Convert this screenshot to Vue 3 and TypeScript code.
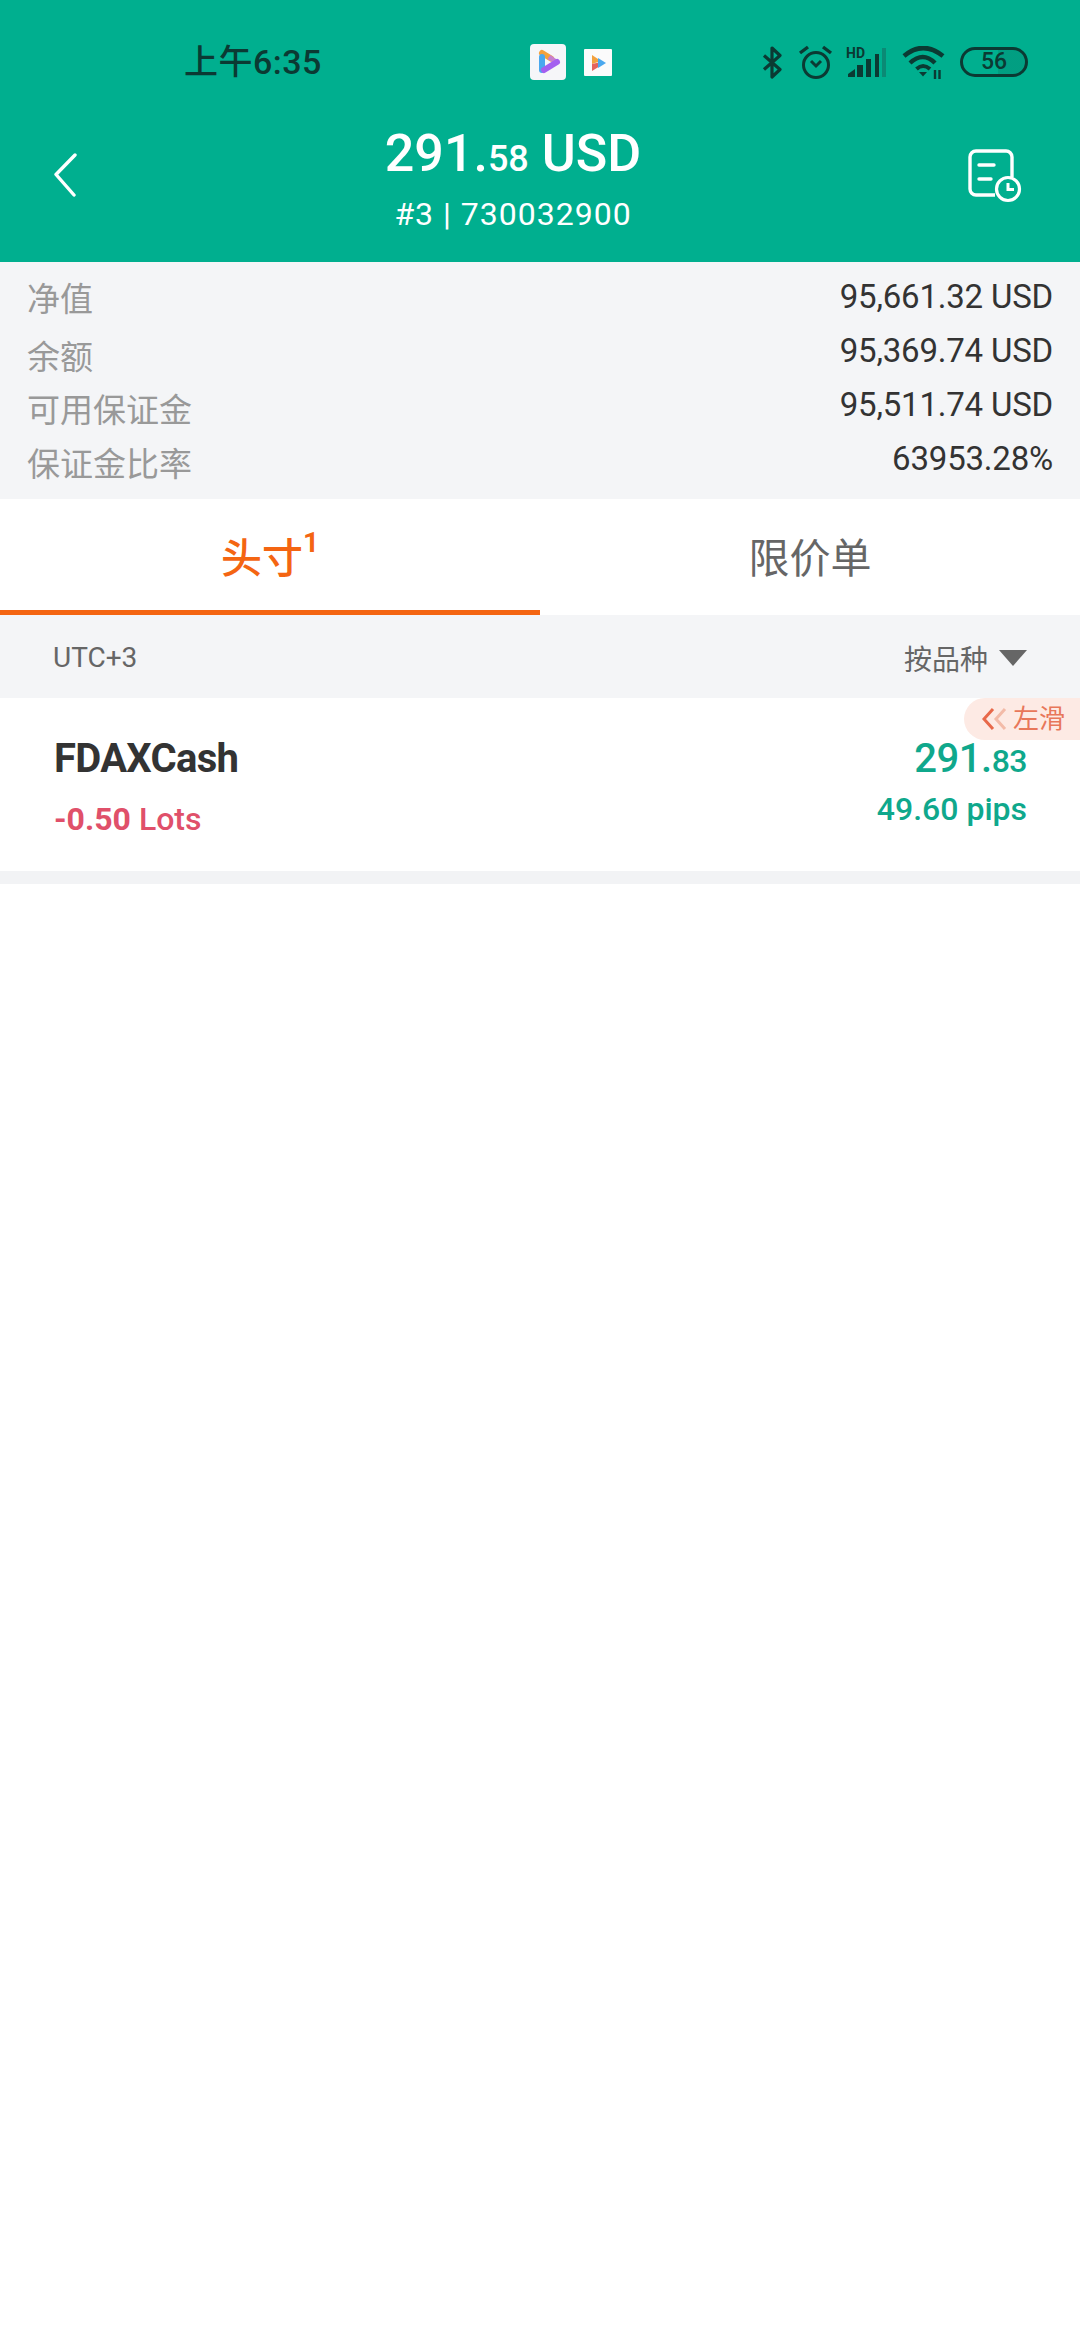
<template>
  <div class="screen">
    <header class="top">
      <div class="status-bar">
        <span class="time">上午6:35</span>
        <div class="notify">
          <svg class="app-big" viewBox="0 0 36 36">
            <rect width="36" height="36" rx="4" fill="#f6f6f9" />
            <path d="M12 9l9 5.500" stroke="#f5a13c" stroke-width="6" fill="none" stroke-linecap="round" />
            <path d="M19 13l7 5" stroke="#c77fd0" stroke-width="5" fill="none" />
            <path d="M12 13v13" stroke="#4aa8ee" stroke-width="6" fill="none" stroke-linecap="round" />
            <path d="M14 26l13-8" stroke="#a45ff0" stroke-width="6" fill="none" stroke-linecap="round" />
          </svg>
          <svg class="app-small" viewBox="0 0 28 27">
            <rect width="28" height="27" rx="1" fill="#fbfbfb" />
            <path d="M8 6l9 6-9 3z" fill="#f2a23f" />
            <path d="M8 15l9-2-1 4-8 5z" fill="#e5635c" />
            <path d="M14 9l8 5-8 5z" fill="#4aa8ee" />
          </svg>
        </div>
        <div class="sys-icons">
          <svg class="bt" viewBox="0 0 21 33">
            <path d="M2 9.500l16 14-8 7.500V2l8 7.500-16 14" fill="none" stroke="#0b3a33" stroke-width="3.200" stroke-linejoin="round" />
          </svg>
          <svg class="alarm" viewBox="0 0 35 34">
            <circle cx="18" cy="20" r="12.500" fill="none" stroke="#0b3a33" stroke-width="3" />
            <path d="M13 16l5 5 5-5" fill="none" stroke="#0b3a33" stroke-width="3" />
            <path d="M2 8l8-6M33 8l-8-6" fill="none" stroke="#0b3a33" stroke-width="3.400" />
          </svg>
          <div class="signal">
            <span class="hd">HD</span>
            <svg viewBox="0 0 41 31" class="bars">
              <path d="M3 30v-3l7-5v8z" fill="#0b3a33" />
              <rect x="12" y="18" width="6" height="12" fill="#0b3a33" />
              <rect x="21" y="12" width="5" height="18" fill="#0b3a33" />
              <rect x="30" y="7" width="4" height="23" fill="#0b3a33" />
              <rect x="37" y="1" width="4" height="29" fill="#0b8a75" />
            </svg>
          </div>
          <svg class="wifi" viewBox="0 0 43 33">
            <path d="M2 10Q21-6 41 10" fill="none" stroke="#0b3a33" stroke-width="4.600" />
            <path d="M8 17Q21 5 33 17" fill="none" stroke="#0b3a33" stroke-width="4.400" />
            <path d="M14.500 23Q21 17 28 23" fill="none" stroke="#0b3a33" stroke-width="4" />
            <path d="M17 26h8l-4 4.500z" fill="#0b3a33" />
            <path d="M33 24v9M37.500 24v9" stroke="#0b3a33" stroke-width="2.400" />
          </svg>
          <div class="battery"><span>56</span></div>
        </div>
      </div>
      <div class="title-row">
        <svg class="back" viewBox="0 0 24 44">
          <path d="M22 2L3 21.500 21 42" fill="none" stroke="#fff" stroke-width="3.400" stroke-linecap="round" stroke-linejoin="round" />
        </svg>
        <div class="title">
          <div class="balance">291.<small>58</small> USD</div>
          <div class="account">#3 | 730032900</div>
        </div>
        <svg class="history" viewBox="0 0 55 55">
          <path d="M28 47H9a6 6 0 0 1-6-6V9a6 6 0 0 1 6-6h30a6 6 0 0 1 6 6v20" fill="none" stroke="#fff" stroke-width="3.400" />
          <path d="M12 17h15M12 31h12" stroke="#fff" stroke-width="3.400" stroke-linecap="round" />
          <circle cx="41" cy="41" r="11.500" fill="none" stroke="#fff" stroke-width="3.200" />
          <path d="M41 35v6.500h6" fill="none" stroke="#fff" stroke-width="3" />
        </svg>
      </div>
    </header>

    <section class="summary">
      <div class="labels">
        <span v-for="item in summary" :key="item.label">{{ item.label }}</span>
      </div>
      <div class="values">
        <span v-for="item in summary" :key="item.label">{{ item.value }}</span>
      </div>
    </section>

    <nav class="tabs">
      <div class="tab active">头寸<sup>1</sup></div>
      <div class="tab">限价单</div>
    </nav>

    <div class="filter-bar">
      <span class="tz">UTC+3</span>
      <span class="sort">按品种<i class="caret"></i></span>
    </div>

    <div class="position">
      <div class="pos-left">
        <div class="symbol">FDAXCash</div>
        <div class="lots"><b>-0.50</b> Lots</div>
      </div>
      <div class="pos-right">
        <div class="price">291.<small>83</small></div>
        <div class="pips">49.60 pips</div>
      </div>
      <div class="swipe-hint">
        <svg viewBox="0 0 25 22">
          <path d="M11 1L2 11l9 10" fill="none" stroke="#e8694a" stroke-width="3" />
          <path d="M23 1l-9 10 9 10" fill="none" stroke="#f3bba8" stroke-width="3" />
        </svg>
        左滑
      </div>
    </div>
    <div class="divider"></div>
  </div>
</template>

<script setup lang="ts">
interface SummaryItem {
  label: string
  value: string
}

const summary: SummaryItem[] = [
  { label: '净值', value: '95,661.32 USD' },
  { label: '余额', value: '95,369.74 USD' },
  { label: '可用保证金', value: '95,511.74 USD' },
  { label: '保证金比率', value: '63953.28%' },
];
</script>

<style>
body {
  background: #fff;
}
</style>

<style scoped>
.screen {
  width: 1080px;
  height: 2340px;
  background: #fff;
  font-family: Roboto, "Noto Sans CJK SC", sans-serif;
  overflow: hidden;
}

/* Green header */
.top {
  height: 262px;
  background: #00af8f;
  box-sizing: border-box;
  padding-top: 44px;
}

.status-bar {
  display: flex;
  align-items: center;
  height: 36px;
  padding-left: 184px;
  color: #0b3a33;
}

.time {
  width: 346px;
  font-size: 34px;
  font-weight: 500;
  letter-spacing: 0.5px;
  line-height: 36px;
}

.notify {
  display: flex;
  align-items: center;
  gap: 18px;
}

.app-big {
  width: 36px;
  height: 36px;
}

.app-small {
  width: 28px;
  height: 27px;
}

.sys-icons {
  display: flex;
  align-items: center;
  margin-left: 150px;
}

.bt {
  width: 21px;
  height: 33px;
}

.alarm {
  width: 35px;
  height: 34px;
  margin-left: 15px;
}

.signal {
  position: relative;
  width: 41px;
  height: 31px;
  margin-left: 12px;
}

.bars {
  display: block;
  width: 41px;
  height: 31px;
}

.hd {
  position: absolute;
  left: 1px;
  top: 0;
  font-size: 14px;
  font-weight: 700;
  line-height: 12px;
}

.wifi {
  width: 43px;
  height: 33px;
  margin-left: 16px;
}

.battery {
  width: 68px;
  height: 30px;
  margin-left: 15px;
  box-sizing: border-box;
  border: 3px solid #0b3a33;
  border-radius: 15px;
  background: linear-gradient(90deg, transparent 56%, rgba(11, 58, 51, 0.14) 56%);
  display: flex;
  align-items: center;
  justify-content: center;
}

.battery span {
  font-size: 23px;
  font-weight: 500;
  line-height: 24px;
}

.title-row {
  display: flex;
  align-items: center;
  justify-content: space-between;
  margin-top: 44px;
  padding: 0 58px 0 53px;
}

.back {
  width: 24px;
  height: 44px;
  margin-bottom: 10px;
}

.history {
  width: 55px;
  height: 55px;
  margin-bottom: 10px;
}

.title {
  color: #fff;
  text-align: center;
  margin-right: 18px;
}

.balance {
  font-size: 52px;
  font-weight: 500;
  line-height: 60px;
}

.balance small {
  font-size: 36px;
}

.account {
  font-size: 32px;
  letter-spacing: 1px;
  line-height: 44px;
  margin-top: 3px;
}

/* Account summary */
.summary {
  height: 237px;
  background: #f4f5f7;
  display: flex;
  justify-content: space-between;
  box-sizing: border-box;
  padding: 8px 27px 0 27px;
}

.labels,
.values {
  display: flex;
  flex-direction: column;
}

.labels span {
  font-size: 33px;
  line-height: 54px;
  color: #999;
}

.labels span:nth-child(1) {
  margin-top: 3px;
}

.labels span:nth-child(2) {
  margin-top: 4px;
}

.labels span:nth-child(3) {
  margin-top: -1px;
}

.values {
  align-items: flex-end;
}

.values span {
  font-size: 33px;
  letter-spacing: -0.2px;
  line-height: 54px;
  color: #333;
}

/* Tabs */
.tabs {
  display: flex;
  height: 116px;
  background: #fff;
}

.tab {
  width: 50%;
  display: flex;
  align-items: center;
  justify-content: center;
  font-size: 41px;
  color: #666;
  box-sizing: border-box;
  border-bottom: 5px solid transparent;
}

.tab.active {
  color: #f46512;
  font-weight: 500;
  border-bottom-color: #f46512;
}

.tab sup {
  font-size: 28px;
  line-height: 28px;
  align-self: flex-start;
  margin-top: 30px;
  font-weight: 700;
}

/* Filter bar */
.filter-bar {
  height: 83px;
  background: #f4f5f7;
  display: flex;
  align-items: center;
  justify-content: space-between;
  padding: 2px 53px 0;
  box-sizing: border-box;
  color: #666;
  font-size: 28px;
}

.sort {
  display: flex;
  align-items: center;
}

.caret {
  width: 0;
  height: 0;
  margin-left: 11px;
  border-left: 14px solid transparent;
  border-right: 14px solid transparent;
  border-top: 16px solid #666;
}

/* Position row */
.position {
  position: relative;
  height: 173px;
  display: flex;
  justify-content: space-between;
  box-sizing: border-box;
  padding: 36px 53px 0 54px;
}

.symbol {
  font-size: 40px;
  font-weight: 700;
  letter-spacing: -0.7px;
  line-height: 50px;
  color: #333;
}

.lots {
  font-size: 32px;
  font-weight: 500;
  line-height: 44px;
  margin-top: 13px;
  color: #e0506a;
}

.lots b {
  font-weight: 700;
}

.pos-right {
  text-align: right;
  color: #0fa88c;
}

.price {
  font-size: 40px;
  font-weight: 500;
  letter-spacing: -0.5px;
  line-height: 50px;
}

.price small {
  font-size: 32px;
}

.pips {
  font-size: 32px;
  font-weight: 500;
  line-height: 44px;
  margin-top: 1px;
}

.swipe-hint {
  position: absolute;
  right: 0;
  top: 0;
  width: 116px;
  height: 42px;
  box-sizing: border-box;
  padding-left: 18px;
  border-radius: 21px 0 0 21px;
  background: #fdeae4;
  color: #e8775a;
  font-size: 26px;
  line-height: 42px;
  display: flex;
  align-items: center;
  gap: 6px;
}

.swipe-hint svg {
  width: 25px;
  height: 22px;
}

.divider {
  height: 13px;
  background: #f2f3f5;
}
</style>
